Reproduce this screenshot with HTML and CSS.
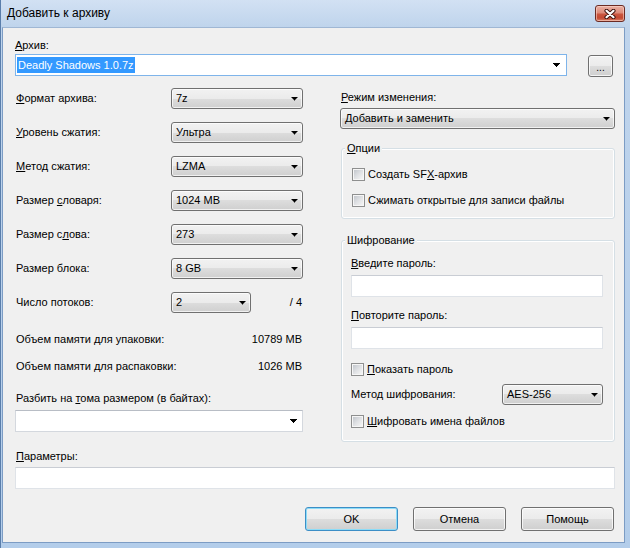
FILE: index.html
```html
<!DOCTYPE html>
<html lang="ru">
<head>
<meta charset="utf-8">
<title>Добавить к архиву</title>
<link rel="stylesheet" href="styles.css">
</head>
<body>
<div class="window">
  <div class="titlebar">
    <span class="title">Добавить к архиву</span>
    <div class="close-btn">
      <svg width="12" height="10" viewBox="0 0 12 10"><path d="M2.5 1.8 L9.5 8.2 M9.5 1.8 L2.5 8.2" stroke="#3e1410" stroke-width="4.2" stroke-linecap="round"/><path d="M2.5 1.8 L9.5 8.2 M9.5 1.8 L2.5 8.2" stroke="#ffffff" stroke-width="2.2" stroke-linecap="round"/></svg>
    </div>
  </div>
  <div class="client">
    <div class="lbl"><u>А</u>рхив:</div>
    <div class="archive-row">
      <div class="ecombo focus archive-combo"><span class="sel">Deadly Shadows 1.0.7z</span><i class="arr"></i></div>
      <div class="btn browse">...</div>
    </div>

    <div class="columns">
      <div class="left">
        <div class="row"><span class="rlbl"><u>Ф</u>ормат архива:</span><div class="combo"><span>7z</span><i class="arr"></i></div></div>
        <div class="row"><span class="rlbl"><u>У</u>ровень сжатия:</span><div class="combo"><span>Ультра</span><i class="arr"></i></div></div>
        <div class="row"><span class="rlbl"><u>М</u>етод сжатия:</span><div class="combo"><span>LZMA</span><i class="arr"></i></div></div>
        <div class="row"><span class="rlbl">Размер <u>с</u>ловаря:</span><div class="combo"><span>1024 MB</span><i class="arr"></i></div></div>
        <div class="row"><span class="rlbl">Размер с<u>л</u>ова:</span><div class="combo"><span>273</span><i class="arr"></i></div></div>
        <div class="row"><span class="rlbl">Размер блока:</span><div class="combo"><span>8 GB</span><i class="arr"></i></div></div>
        <div class="row last"><span class="rlbl">Число потоков:</span><div class="combo short"><span>2</span><i class="arr"></i></div><span class="of">/ 4</span></div>
        <div class="mem first"><span>Объем памяти для упаковки:</span><span>10789 MB</span></div>
        <div class="mem"><span>Объем памяти для распаковки:</span><span>1026 MB</span></div>
        <div class="lbl split-lbl">Разбить на <u>т</u>ома размером (в байтах):</div>
        <div class="ecombo split-combo"><span></span><i class="arr"></i></div>
      </div>

      <div class="right">
        <div class="lbl mode-lbl"><u>Р</u>ежим изменения:</div>
        <div class="combo mode-combo"><span>Добавить и заменить</span><i class="arr"></i></div>

        <fieldset class="group opts">
          <legend><u>О</u>пции</legend>
          <div class="check"><i class="cb"></i><span>Создать SF<u>X</u>-архив</span></div>
          <div class="check gap"><i class="cb"></i><span>Сжимать открытые для записи файлы</span></div>
        </fieldset>

        <fieldset class="group enc">
          <legend>Шифрование</legend>
          <div class="lbl"><u>В</u>ведите пароль:</div>
          <div class="input pw"></div>
          <div class="lbl pw-lbl2"><u>П</u>овторите пароль:</div>
          <div class="input pw"></div>
          <div class="check show-pw"><i class="cb"></i><span><u>П</u>оказать пароль</span></div>
          <div class="method-row"><span>Метод шифрования:</span><div class="combo aes"><span>AES-256</span><i class="arr"></i></div></div>
          <div class="check enc-names"><i class="cb"></i><span><u>Ш</u>ифровать имена файлов</span></div>
        </fieldset>
      </div>
    </div>

    <div class="lbl params-lbl"><u>П</u>араметры:</div>
    <div class="input params"></div>

    <div class="buttons">
      <div class="btn dlg default">OK</div>
      <div class="btn dlg">Отмена</div>
      <div class="btn dlg">Помощь</div>
    </div>
  </div>
</div>
</body>
</html>
```

FILE: styles.css
```css
* { box-sizing: border-box; }

html, body {
  margin: 0;
  padding: 0;
  background: #b9d0ea;
}

body {
  font-family: "Liberation Sans", Arial, sans-serif;
  font-size: 11px;
  line-height: 13px;
  color: #000;
}

u { text-decoration: underline; text-underline-offset: 1px; }

.window {
  width: 630px;
  height: 548px;
  display: flex;
  flex-direction: column;
  background: linear-gradient(to bottom, #d2e1f3 0, #bfd4ec 27px, #b3cdea 100%);
  border-left: 1px solid #5a7eab;
}

.titlebar {
  height: 27px;
  flex: 0 0 27px;
  display: flex;
  align-items: center;
  justify-content: space-between;
  padding: 0 5px 0 6px;
}

.title {
  font-family: "Liberation Sans", Arial, sans-serif;
  font-size: 12px;
  color: #000;
}

.close-btn {
  width: 30px;
  height: 17px;
  border: 1px solid #6b2b24;
  border-radius: 3px;
  background: linear-gradient(to bottom, #e9b0a4 0%, #dd8b7a 45%, #c9553f 55%, #c44a33 80%, #d8826a 100%);
  box-shadow: inset 0 0 0 1px rgba(255, 220, 210, 0.55);
  display: flex;
  align-items: center;
  justify-content: center;
}

.close-btn svg { display: block; }

.client {
  flex: 1;
  margin: 0 5px 5px 1px;
  background: #f0f0f0;
  border: 1px solid #7c9cc4;
  border-top-color: #9fb7d4;
  padding: 11px 9px 0 12px;
}

.lbl { height: 13px; white-space: nowrap; }

/* archive row */
.archive-row {
  display: flex;
  margin-top: 2px;
  height: 23px;
}

.ecombo {
  height: 22px;
  background: #fff;
  border: 1px solid #d4d8de;
  border-top-color: #b8bdc5;
  display: flex;
  align-items: center;
  padding-left: 1px;
}

.ecombo.focus { border-color: #7eb4ea; }

.archive-combo { width: 552px; }

.sel {
  background: #3399ff;
  color: #fff;
  line-height: 16px;
  padding: 0 1px;
}

.arr {
  display: block;
  width: 7px;
  height: 4px;
  background: #000;
  margin-left: auto;
  clip-path: polygon(0 0, 7px 0, 7px 1px, 6px 1px, 6px 2px, 5px 2px, 5px 3px, 4px 3px, 4px 4px, 3px 4px, 3px 3px, 2px 3px, 2px 2px, 1px 2px, 1px 1px, 0 1px);
}

.archive-combo .arr { margin-right: 6px; }

.btn {
  border: 1px solid #707070;
  border-radius: 3px;
  background: linear-gradient(to bottom, #f2f2f2 0%, #ebebeb 50%, #dddddd 50%, #cfcfcf 100%);
  box-shadow: inset 0 0 0 1px rgba(255, 255, 255, 0.75);
  display: flex;
  align-items: center;
  justify-content: center;
}

.browse {
  width: 25px;
  height: 22px;
  margin-left: 21px;
  margin-top: 1px;
  padding-top: 3px;
  font-size: 10px;
}

/* columns */
.columns {
  display: grid;
  grid-template-columns: 288px 275px;
  column-gap: 37px;
  margin-top: 11px;
}

.left { display: flex; flex-direction: column; }

.row {
  display: flex;
  align-items: center;
  height: 21px;
  margin-bottom: 13px;
}

.row.last { margin-bottom: 0; }

.rlbl {
  flex: 0 0 156px;
  padding-left: 1px;
  white-space: nowrap;
}

.combo {
  height: 21px;
  width: 132px;
  border: 1px solid #707070;
  border-radius: 3px;
  background: linear-gradient(to bottom, #f2f2f2 0%, #ebebeb 50%, #dddddd 50%, #cfcfcf 100%);
  box-shadow: inset 0 0 0 1px rgba(255, 255, 255, 0.7);
  display: flex;
  align-items: center;
  padding: 0 4px 0 4px;
  white-space: nowrap;
}

.combo.short { width: 80px; }

.of { margin-left: auto; padding-right: 1px; }

.mem {
  display: flex;
  justify-content: space-between;
  height: 13px;
  margin-top: 14px;
  padding-left: 1px;
  padding-right: 1px;
}

.mem.first { margin-top: 20px; }

.split-lbl { margin-top: 19px; padding-left: 1px; }

.split-combo {
  width: 288px;
  margin-top: 5px;
}

.split-combo .arr { margin-right: 5px; }

/* right column */
.right {
  display: flex;
  flex-direction: column;
  padding-top: 3px;
}

.mode-lbl { padding-left: 1px; }

.mode-combo {
  width: 275px;
  margin-top: 4px;
}

.group {
  margin: 0 0 0 1px;
  width: 274px;
  min-inline-size: 0;
  border: 1px solid #d5dfe5;
  border-radius: 3px;
  box-shadow: inset 0 0 0 1px #ffffff;
}

.group legend {
  padding: 0 2px;
  line-height: 13px;
  background: #f0f0f0;
}

.opts {
  margin-top: 13px;
  padding: 13px 10px 11px 10px;
}

.opts legend { margin-left: -7px; }

.check {
  display: flex;
  align-items: center;
  height: 13px;
  white-space: nowrap;
}

.check.gap { margin-top: 13px; }

.cb {
  display: block;
  flex: 0 0 13px;
  width: 13px;
  height: 13px;
  border: 1px solid #8e8f8f;
  padding: 1px;
  background: linear-gradient(135deg, #c3c7cd 0%, #dfe1e4 50%, #f5f5f5 100%) content-box, #f6f6f6;
  margin-right: 3px;
}

.enc {
  margin-top: 15px;
  padding: 10px 10px 13px 9px;
}

.enc legend { margin-left: -6px; }

.input {
  height: 22px;
  background: #fff;
  border: 1px solid #dfe3e8;
  border-top-color: #c9cdd4;
}

.pw { width: 252px; margin-top: 5px; }

.pw-lbl2 { margin-top: 12px; }

.show-pw { margin-top: 14px; }

.method-row {
  display: flex;
  align-items: center;
  justify-content: space-between;
  width: 252px;
  height: 21px;
  margin-top: 8px;
}

.combo.aes { width: 101px; }

.enc-names { margin-top: 10px; }

/* bottom */
.params-lbl { margin-top: 8px; padding-left: 1px; }

.params {
  width: 600px;
  margin-top: 4px;
}

.buttons {
  display: flex;
  justify-content: flex-end;
  gap: 15px;
  margin-top: 18px;
  padding-right: 1px;
}

.dlg {
  width: 93px;
  height: 24px;
}

.dlg.default {
  border-color: #3c8ec6;
  box-shadow: inset 0 0 0 1px #8ddcf7;
}
```
